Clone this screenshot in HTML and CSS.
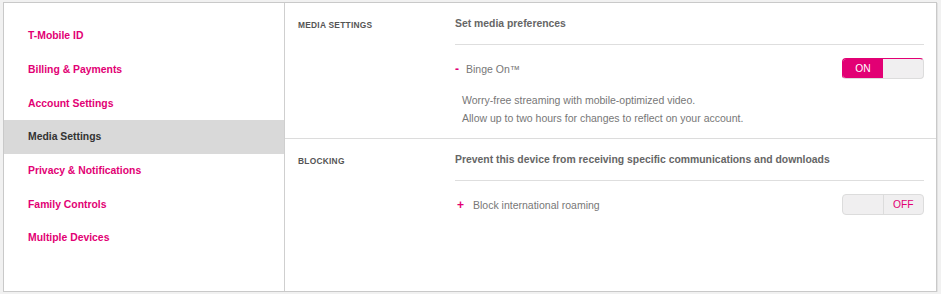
FILE: index.html
```html
<!DOCTYPE html>
<html lang="en">
<head>
    <meta charset="UTF-8">
    <meta name="viewport" content="width=device-width, initial-scale=1.0">
    <title>Profile - Media Settings</title>
    <link rel="stylesheet" href="styles.css">
</head>
<body>

    <div class="profile">

        <!-- Side menu -->
        <ul class="side-nav">
            <li><a href="#">T-Mobile ID</a></li>
            <li><a href="#">Billing &amp; Payments</a></li>
            <li><a href="#">Account Settings</a></li>
            <li class="active"><a href="#">Media Settings</a></li>
            <li><a href="#">Privacy &amp; Notifications</a></li>
            <li><a href="#">Family Controls</a></li>
            <li><a href="#">Multiple Devices</a></li>
        </ul>

        <!-- Settings -->
        <div class="panel">
            <div class="section">
                <div class="label">MEDIA SETTINGS</div>
                <div class="main">
                    <h3 class="heading">Set media preferences</h3>
                    <div class="row">
                        <span class="sign minus">-</span>
                        <span class="row-title">Binge On™</span>
                        <div class="toggle on">
                            <span class="half active">ON</span>
                            <span class="half"></span>
                        </div>
                    </div>
                    <p class="desc">Worry-free streaming with mobile-optimized video.<br>
                        Allow up to two hours for changes to reflect on your account.</p>
                </div>
            </div>

            <div class="section">
                <div class="label">BLOCKING</div>
                <div class="main">
                    <h3 class="heading">Prevent this device from receiving specific communications and downloads</h3>
                    <div class="row">
                        <span class="sign plus">+</span>
                        <span class="row-title">Block international roaming</span>
                        <div class="toggle off">
                            <span class="half"></span>
                            <span class="half active">OFF</span>
                        </div>
                    </div>
                </div>
            </div>
        </div>

    </div>

</body>
</html>
```

FILE: styles.css
```css
body {
    margin: 0;
    padding: 2px 4px 0 3px;
    background-color: #f1f1f1;
    font-family: Arial, "Liberation Sans", sans-serif;
}

.profile {
    display: flex;
    height: 288px;
    background-color: #fff;
    border: 1px solid #c9c9c9;
    box-shadow: 1px 1px 0 #e2e2e2;
}

/* side menu */
.side-nav {
    list-style: none;
    margin: 0;
    padding: 16px 0 0;
    width: 280px;
    border-right: 1px solid #cfcfcf;
}

.side-nav li {
    height: 33.67px;
    display: flex;
    align-items: center;
    padding-left: 24px;
}

.side-nav a {
    color: #e20074;
    font-size: 10.4px;
    font-weight: bold;
    text-decoration: none;
}

.side-nav li.active {
    background-color: #d9d9d9;
}

.side-nav li.active a {
    color: #333;
}

/* settings panel */
.panel {
    flex: 1;
}

.section {
    display: grid;
    grid-template-columns: 157px 1fr;
    padding: 12px 12px 11px 13px;
    border-bottom: 1px solid #dcdcdc;
}

.section:last-child {
    border-bottom: none;
}

.label {
    font-size: 8.4px;
    font-weight: bold;
    letter-spacing: 0.25px;
    color: #555;
    line-height: 18px;
    padding-top: 1px;
}

.heading {
    margin: 0;
    font-size: 10.4px;
    font-weight: bold;
    color: #666;
    line-height: 18px;
    padding-bottom: 11px;
    border-bottom: 1px solid #dedede;
}

.row {
    display: flex;
    align-items: center;
    margin-top: 13px;
    height: 21px;
}

.sign {
    color: #e20074;
    font-weight: bold;
    font-size: 12px;
}

.minus {
    width: 11px;
}

.plus {
    width: 16px;
    padding-left: 2px;
}

.row-title {
    flex: 1;
    font-size: 10.5px;
    color: #777;
}

.toggle {
    display: flex;
    width: 80px;
    height: 19px;
    border: 1px solid #dcdcdc;
    border-radius: 4px;
    background-color: #f0eff0;
    overflow: hidden;
}

.half {
    flex: 1;
    display: flex;
    align-items: center;
    justify-content: center;
    font-size: 10.3px;
}

.toggle.on .half.active {
    background-color: #e20074;
    color: #fff;
}

.toggle.off .half.active {
    color: #e20074;
    border-left: 1px solid #dcdcdc;
}

.toggle.on {
    border-color: #e20074 #dcdcdc #dcdcdc #e20074;
}

.desc {
    margin: 12px 0 0;
    padding-left: 7px;
    font-size: 10.5px;
    line-height: 18px;
    color: #777;
}
```
